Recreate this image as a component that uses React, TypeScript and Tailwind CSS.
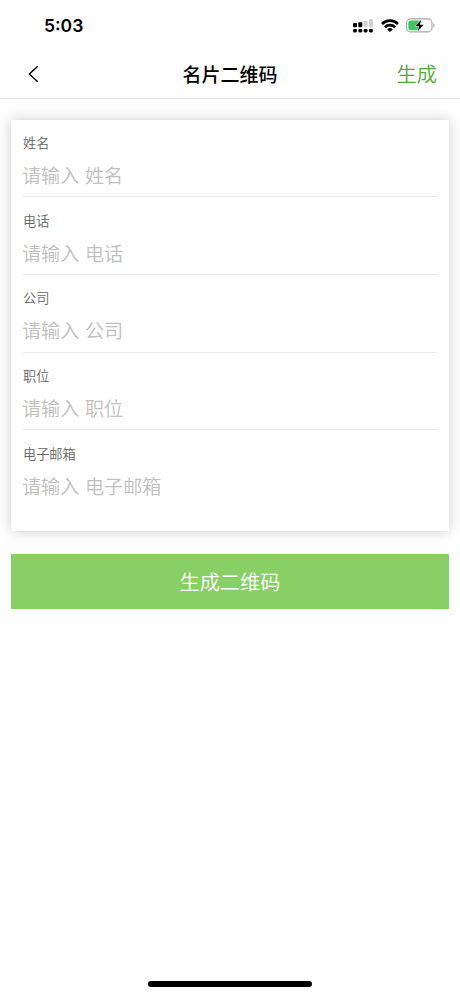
import { useState } from 'react'

const fields = [
    { name: 'name', label: '姓名' },
    { name: 'phone', label: '电话' },
    { name: 'company', label: '公司' },
    { name: 'position', label: '职位' },
    { name: 'email', label: '电子邮箱' },
]

const StatusBar = () => {
    return (
        <div className="flex h-[50px] items-center justify-between pl-[44px] pr-[24px] pt-px">
            <span className="pt-px font-['Inter','Liberation_Sans',sans-serif] text-[17.5px] font-semibold leading-none">
                5:03
            </span>
            <div className="flex items-center">
                <svg width="20" height="14" viewBox="0 0 20 14">
                    <g fill="#000">
                        <rect x="0" y="4" width="4" height="4.2" rx="1" />
                        <rect x="5.3" y="3.2" width="4" height="5" rx="1" />
                        <rect x="0" y="10" width="4" height="3.4" rx="1.3" />
                        <rect x="5.3" y="10" width="4" height="3.4" rx="1.3" />
                        <rect x="10.6" y="10" width="4" height="3.4" rx="1.3" />
                        <rect x="15.9" y="10" width="4" height="3.4" rx="1.3" />
                    </g>
                    <g fill="#d0d0d0">
                        <rect x="10.6" y="1.7" width="4" height="6.5" rx="1" />
                        <rect x="15.9" y="0" width="4" height="8.2" rx="1" />
                    </g>
                </svg>
                <svg className="ml-[8px]" width="18" height="13" viewBox="0 0 18 13">
                    <g fill="none" stroke="#000" strokeWidth="2.7">
                        <path d="M1 4.9a11.6 11.6 0 0 1 16 0" />
                        <path d="M3.9 8.2a7.4 7.4 0 0 1 10.2 0" />
                    </g>
                    <path d="M9 13 6.2 10.4a4 4 0 0 1 5.6 0z" />
                </svg>
                <svg className="ml-[7px]" width="30" height="15" viewBox="0 0 30 15">
                    <rect x="0.6" y="0.9" width="25.4" height="13" rx="4" fill="#fff" stroke="#a6a6a6" strokeWidth="1.1" />
                    <path d="M4.6 2.6H13v9.6H4.6a2.3 2.3 0 0 1-2.3-2.3v-5a2.3 2.3 0 0 1 2.3-2.3z" fill="#3dc764" />
                    <path d="M27.4 5.2c1.5.4 1.5 4 0 4.4z" fill="#a6a6a6" />
                    <path
                        d="M15.2 1.8 9.4 8.3h3.7l-1.4 5 5.9-6.6h-3.7z"
                        fill="#000"
                        stroke="#fff"
                        strokeWidth="1"
                        paintOrder="stroke"
                    />
                </svg>
            </div>
        </div>
    )
}

const Header = () => {
    return (
        <header className="grid h-[49px] grid-cols-[1fr_auto_1fr] items-center border-b border-[#dedede] pl-[28px] pr-[23px]">
            <button type="button" aria-label="返回" className="-mt-px justify-self-start">
                <svg width="11" height="18" viewBox="0 0 11 18" fill="none" stroke="#000" strokeWidth="1.4">
                    <path d="M9.7 1.2 1.4 9l8.3 7.8" />
                </svg>
            </button>
            <h1 className="-ml-[5px] whitespace-nowrap pb-[2px] text-[19px] font-medium leading-none">名片二维码</h1>
            <button type="button" className="justify-self-end text-[20.2px] font-[350] leading-none text-[#56a936]">
                生成
            </button>
        </header>
    )
}

const App = () => {
    const [values, setValues] = useState<Record<string, string>>({})

    return (
        <div className="flex h-[996px] w-[460px] flex-col bg-[#fefefe] font-['Noto_Sans_CJK_SC',sans-serif] text-black">
            <StatusBar />
            <Header />
            <form className="flex flex-col pl-[11.4px] pr-[11.5px] pt-[21px]" onSubmit={(e) => e.preventDefault()}>
                <div className="h-[411px] bg-white px-[11.6px] shadow-[0_0_12px_rgba(0,0,0,0.2)]">
                    {fields.map(({ name, label }) => (
                        <div
                            key={name}
                            className="flex h-[77.75px] flex-col border-b border-[#ebebeb] pt-[15.6px] first:h-[77px] first:pt-[14.6px] last:border-b-0"
                        >
                            <label htmlFor={name} className="text-[13.2px] font-[350] leading-[16px] text-[#666]">
                                {label}
                            </label>
                            <input
                                id={name}
                                type="text"
                                value={values[name] ?? ''}
                                onChange={(e) => setValues({ ...values, [name]: e.target.value })}
                                placeholder={`请输入 ${label}`}
                                className="-ml-px mt-[9px] h-[30px] w-full bg-transparent text-[19.1px] font-[350] outline-none [word-spacing:1.5px] placeholder:text-[#c0c0c0]"
                            />
                        </div>
                    ))}
                </div>
                <button
                    type="submit"
                    className="mt-[22.5px] h-[55.5px] bg-[#88d066] pt-px text-[20.2px] font-[350] leading-none text-white"
                >
                    生成二维码
                </button>
            </form>
            <div className="mx-auto mb-[9px] mt-auto h-[6px] w-[164px] rounded-full bg-black" />
        </div>
    )
}

export default App
